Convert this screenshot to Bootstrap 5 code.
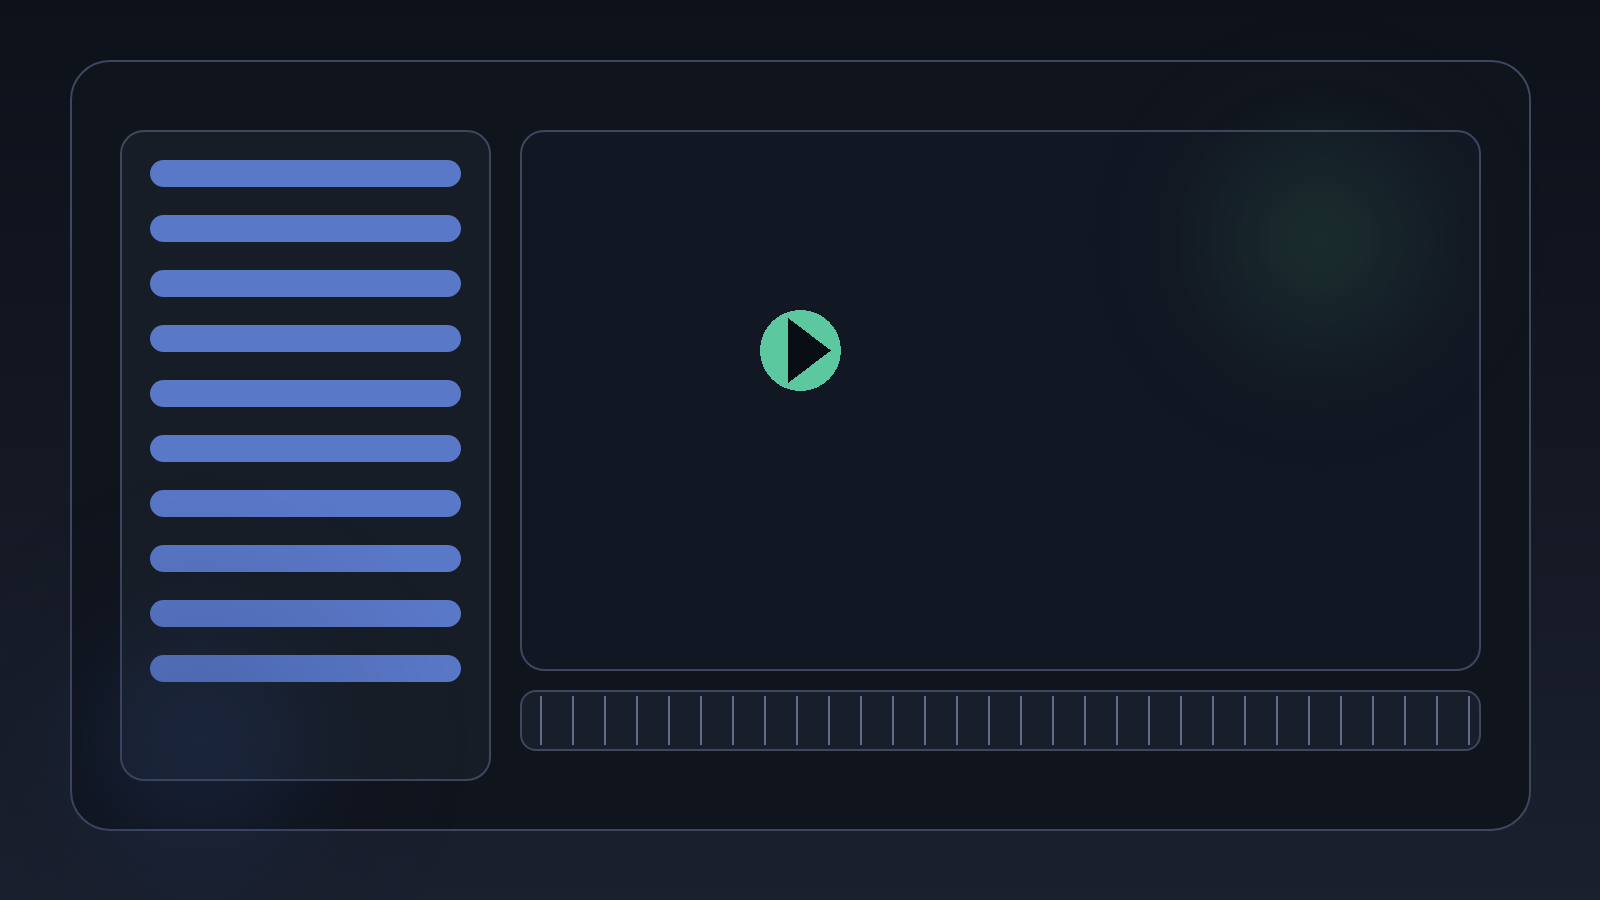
<!DOCTYPE html>
<html lang="en">
<head>
<meta charset="utf-8">
<meta name="viewport" content="width=device-width, initial-scale=1">
<title>Player</title>
<link href="https://cdn.jsdelivr.net/npm/bootstrap@5.3.0/dist/css/bootstrap.min.css" rel="stylesheet">
<style>
body { font-family: "Liberation Sans", sans-serif; background: linear-gradient(#0d111a, #141823 50%, #1a202e) fixed; }
.page { padding: 60px 69px 69px 70px; }
.frame, .tracks, .stage, .timeline { border: 2px solid #3f475e; }
.frame { background: #10141d; border-radius: 40px; padding: 68px 48px 48px; gap: 29px; }
.tracks { background: #171d27; border-radius: 24px; flex: 0 0 371px; padding: 28px; gap: 28px; }
.track { background: #5a78c8; border-radius: 14px; height: 27px; }
.viewer { gap: 19px; padding-bottom: 30px; }
.stage { background: #121823; border-radius: 24px; padding: 178px 238px; }
.timeline { background: #191e2b; border-radius: 16px; height: 61px; padding: 4px 9px 4px 18px; }
.tick { width: 2px; background: #626c8b; }
.play { width: 81px; height: 81px; }
/* soft lights that lie over the whole window */
.glow {
  pointer-events: none;
  background:
    radial-gradient(circle 230px at 82.5% 240px, rgba(50,105,75,.24), rgba(50,105,78,.2) 20%, rgba(44,95,82,.11) 45%, rgba(35,60,60,.04) 65%, rgba(20,30,45,0)),
    radial-gradient(circle 270px at 200px 740px, rgba(34,56,108,.28), rgba(34,56,106,.22) 25%, rgba(28,46,88,.12) 45%, rgba(20,28,44,.06) 65%, rgba(20,26,40,0));
}
</style>
</head>
<body>
<div class="page d-flex min-vh-100">
  <main class="frame d-flex flex-grow-1">
    <aside class="tracks d-flex flex-column">
      <div class="track"></div>
      <div class="track"></div>
      <div class="track"></div>
      <div class="track"></div>
      <div class="track"></div>
      <div class="track"></div>
      <div class="track"></div>
      <div class="track"></div>
      <div class="track"></div>
      <div class="track"></div>
    </aside>
    <section class="viewer d-flex flex-column flex-grow-1">
      <div class="stage flex-grow-1">
        <button type="button" class="play btn p-0 border-0 rounded-circle d-block" aria-label="Play">
          <svg class="d-block" width="81" height="81" viewBox="0 0 81 81" shape-rendering="crispEdges" aria-hidden="true">
            <circle cx="40.5" cy="40.5" r="40.5" fill="#5bc8a0"/>
            <path d="M28 8 71 40.500 28 73Z" fill="#090e14"/>
          </svg>
        </button>
      </div>
      <div class="timeline d-flex justify-content-between">
        <span class="tick"></span><span class="tick"></span><span class="tick"></span><span class="tick"></span><span class="tick"></span>
        <span class="tick"></span><span class="tick"></span><span class="tick"></span><span class="tick"></span><span class="tick"></span>
        <span class="tick"></span><span class="tick"></span><span class="tick"></span><span class="tick"></span><span class="tick"></span>
        <span class="tick"></span><span class="tick"></span><span class="tick"></span><span class="tick"></span><span class="tick"></span>
        <span class="tick"></span><span class="tick"></span><span class="tick"></span><span class="tick"></span><span class="tick"></span>
        <span class="tick"></span><span class="tick"></span><span class="tick"></span><span class="tick"></span><span class="tick"></span>
      </div>
    </section>
  </main>
</div>
<div class="glow position-fixed top-0 start-0 w-100 h-100"></div>
<script src="https://cdn.jsdelivr.net/npm/bootstrap@5.3.0/dist/js/bootstrap.bundle.min.js"></script>
</body>
</html>
